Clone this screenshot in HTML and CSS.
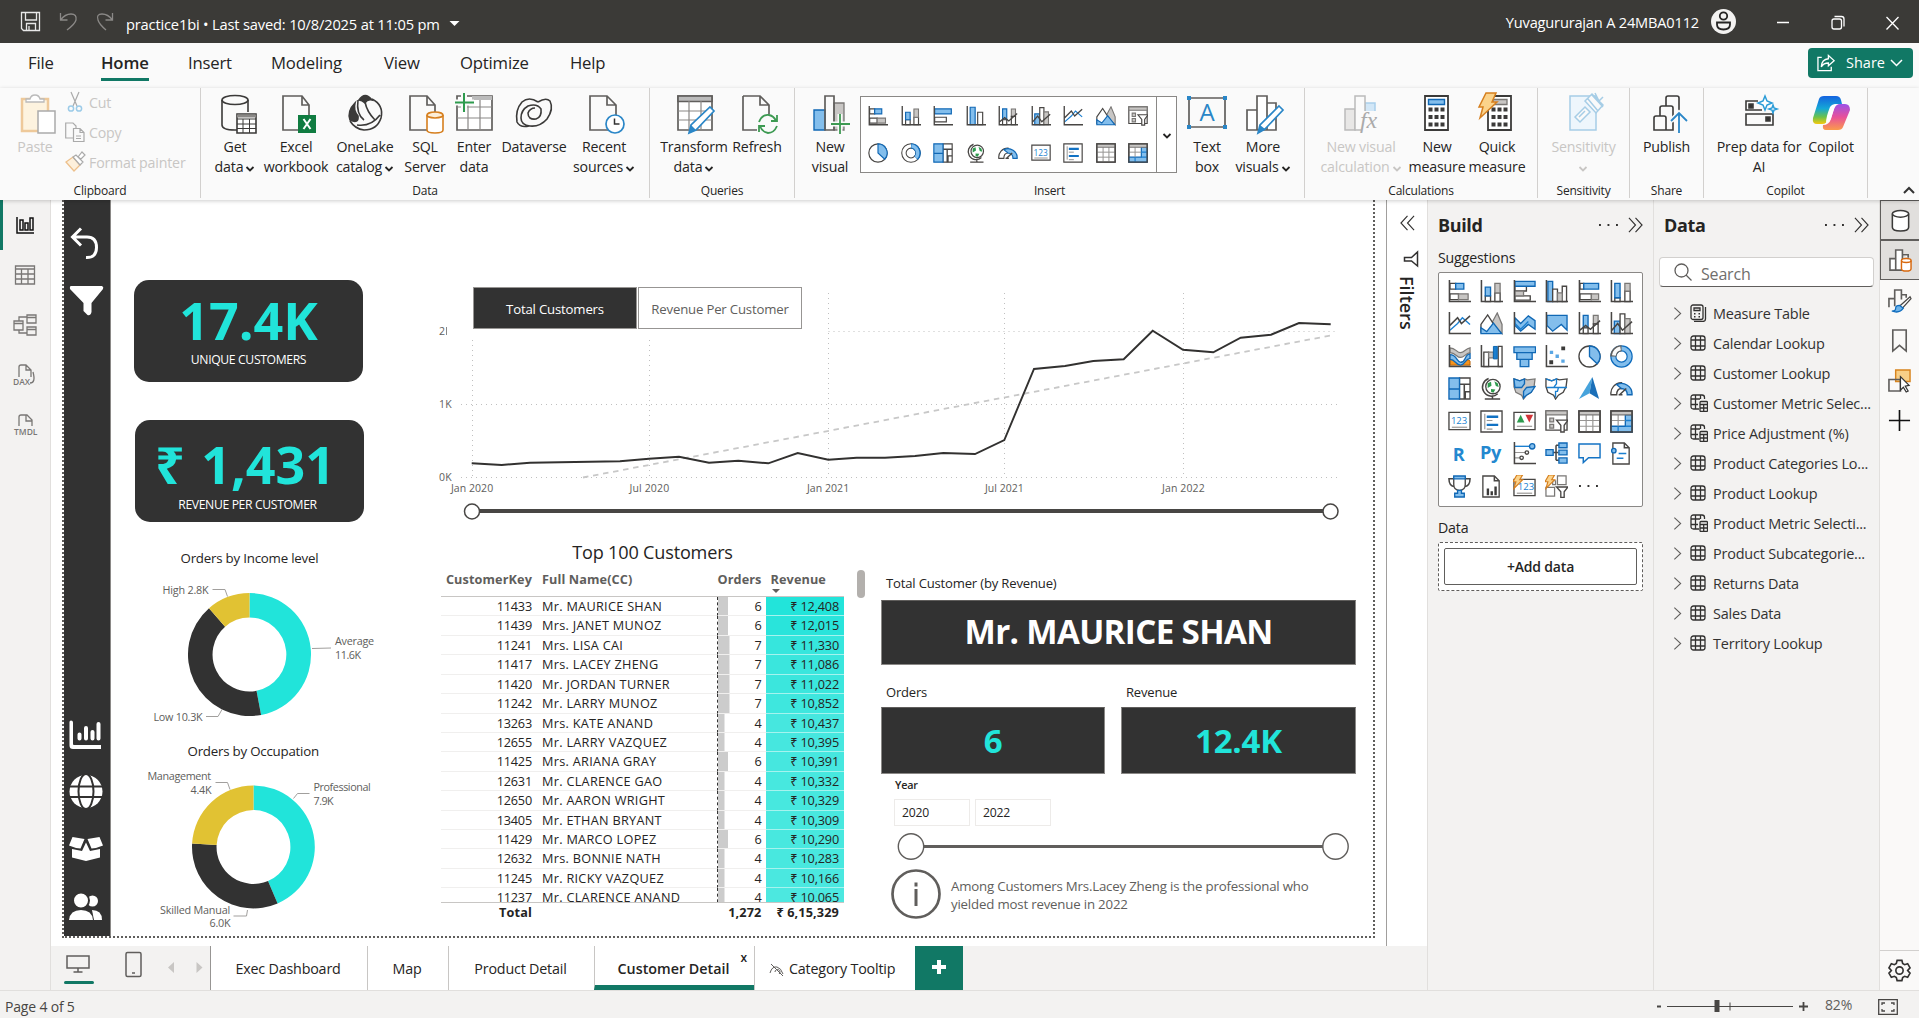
FILE: index.html
```html
<!DOCTYPE html>
<html lang="en">
<head>
<meta charset="utf-8">
<title>practice1bi</title>
<link rel="stylesheet" href="styles.css">
</head>
<body>
<svg class="defs" width="0" height="0">
  <defs>
    <linearGradient id="cp1" x1="0" y1="0" x2="0" y2="1"><stop offset="0" stop-color="#1463e0"/><stop offset=".45" stop-color="#15a8d6"/><stop offset=".75" stop-color="#6cc24a"/><stop offset="1" stop-color="#f6c90e"/></linearGradient>
    <linearGradient id="cp2" x1="0" y1="0" x2="0" y2="1"><stop offset="0" stop-color="#9b52e8"/><stop offset=".5" stop-color="#e8509a"/><stop offset="1" stop-color="#fb9b4b"/></linearGradient>
  </defs>
  <symbol id="v-sbar" viewBox="0 0 24 24"><path class="w" d="M2 3.500h6v6H2zM2 14.500h9v6H2z"/><path class="b" d="M8 3.500h8.500v6H8z"/><path class="g" d="M11 14.500h10v6H11z"/><path class="a" d="M1.500 0v22.500H24"/></symbol>
  <symbol id="v-scol" viewBox="0 0 24 24"><path class="w" d="M5.500 16.500h5.500v6H5.500zM15.500 13.500h5.500v9h-5.500z"/><path class="b" d="M5.500 7.500h5.500v9H5.500z"/><path class="g" d="M15.500 3.500h5.500v10h-5.500z"/><path class="a" d="M1.500 0v22.500H24"/></symbol>
  <symbol id="v-cbar" viewBox="0 0 24 24"><path class="w" d="M2 6.500h12v5H2zM2 16.500h16v4.500H2z"/><path class="g" d="M2 11.500h9v5H2z"/><path class="b" d="M2 1.500h21v5H2z"/><path class="a" d="M1.500 0v22.500H24"/></symbol>
  <symbol id="v-cbar2" viewBox="0 0 24 24"><path class="w" d="M2 13.500h14v5.500H2z"/><path class="b" d="M2 3.500h20v6H2z"/><path class="a" d="M1.500 0v22.500H24"/></symbol>
  <symbol id="v-ccol" viewBox="0 0 24 24"><path class="b" d="M3 1.500h5v21H3z"/><path class="w" d="M8 9.500h5v13H8zM18 6.500h4.500v16H18z"/><path class="g" d="M13 13.500h5v9h-5z"/><path class="a" d="M1.500 0v22.500H24"/></symbol>
  <symbol id="v-ccol2" viewBox="0 0 24 24"><path class="b" d="M5 1.500h6v21H5z"/><path class="w" d="M14 7.500h6v15h-6z"/><path class="a" d="M1.500 0v22.500H24"/></symbol>
  <symbol id="v-hbar" viewBox="0 0 24 24"><path class="w" d="M2 3.500h4v6H2zM2 14.500h12v6H2z"/><path class="b" d="M6 3.500h15.500v6H6z"/><path class="g" d="M14 14.500h7.500v6H14z"/><path class="a" d="M1.500 0v22.500H24"/></symbol>
  <symbol id="v-hcol" viewBox="0 0 24 24"><path class="w" d="M5 18.500h5.500v4H5zM15.500 11.500h5.500v11h-5.500z"/><path class="b" d="M5 3.500h5.500v15H5z"/><path class="g" d="M15.500 3.500h5.500v8h-5.500z"/><path class="a" d="M1.500 0v22.500H24"/></symbol>
  <symbol id="v-line" viewBox="0 0 24 24"><path class="bl" d="M2 19L10 12l5-6 8 7"/><path class="a" d="M2 14L10 6l4 6 9-8M1.500 0v22.500H24"/></symbol>
  <symbol id="v-area" viewBox="0 0 24 24"><path class="g" d="M12 12L18 1l5 12v9.500z"/><path class="w" d="M1 13L8 3l9 14-6 4H1z"/><path class="b" d="M1 22.500v-6l6 4 7-9 8.500 11z"/></symbol>
  <symbol id="v-sarea" viewBox="0 0 24 24"><path class="b" d="M2 6l6 6 8-8 7 5v9l-7-5-8 7-6-6z"/><path class="bl" d="M2 12l6 6 8-8"/><path class="a" d="M1.500 0v22.500H24"/></symbol>
  <symbol id="v-harea" viewBox="0 0 24 24"><path class="b" d="M2 3.500h21V19l-6-6-9 7-6-6z"/><path class="a" d="M1.500 0v22.500H24"/></symbol>
  <symbol id="v-lscol" viewBox="0 0 24 24"><path class="b" d="M5.500 3.500h5v13h-5z"/><path class="g" d="M16 3.500h5v9h-5z"/><path class="w" d="M5.500 16.500h5v6h-5zM16 12.500h5v10h-5z"/><path class="a" d="M2 19l6-5 5 4 10-9M1.500 0v22.500H24"/></symbol>
  <symbol id="v-lccol" viewBox="0 0 24 24"><path class="b" d="M4.500 9.500h6v13h-6z"/><path class="w" d="M10.500 2h5v20.500h-5z"/><path class="g" d="M15.500 7h5.500v15.500h-5.500z"/><path class="a" d="M2 19l6-7 5 7 10-9M1.500 0v22.500H24"/></symbol>
  <symbol id="v-ribbon" viewBox="0 0 24 24"><path d="M2 14q6 0 7 3t7 0 7 0v4H2z" fill="#f7941d" stroke="#b45f06"/><path class="b" d="M2 10c8 0 7 9 12 8s3-8 9-9v5c-6 1-5 7-10 7S8 15 2 15z"/><path class="g" d="M2 3c6 0 7 5 11 5s5-4 10-5v5c-5 1-6 5-10 5S8 8 2 8z"/><path class="a" d="M1.500 0v22.500H24"/></symbol>
  <symbol id="v-water" viewBox="0 0 24 24"><path class="w" d="M4 7.500h5v15H4zM19 1.500h4v21h-4z"/><path class="g" d="M9 7.500h5v6H9z"/><path d="M14 1.500h4v13h-4z" fill="#1a7fd0" stroke="#0b63ab"/><path class="a" d="M1.500 0v22.500H24"/></symbol>
  <symbol id="v-funnel" viewBox="0 0 24 24"><path class="b" d="M1 2h22.500v6H1zM4 8h16v7H4zM7.500 15h9v7.500h-9z"/></symbol>
  <symbol id="v-scatter" viewBox="0 0 24 24"><path d="M5 6h3.500v3.500H5zM11 10h3.500v3.500H11zM17 15h3.500v3.500H17z" fill="#5aa7e4"/><path d="M17 1.500h4v4h-4zM4.500 16h4v4h-4z" fill="#3b3a39"/><path class="a" d="M1.500 0v22.500H24"/></symbol>
  <symbol id="v-pie" viewBox="0 0 24 24"><circle class="w" cx="12" cy="12" r="11"/><path class="b" d="M12 1a11 11 0 0 1 8 18.500L12 12z"/></symbol>
  <symbol id="v-donut" viewBox="0 0 24 24"><circle cx="12" cy="12" r="8.500" fill="none" stroke="#0f6cbd" stroke-width="6.500"/><circle cx="12" cy="12" r="8.500" fill="none" stroke="#83beec" stroke-width="4"/><path d="M3.500 12A8.500 8.500 0 0 1 12 3.500" fill="none" stroke="#605e5c" stroke-width="6.500"/><path d="M4 11A8.500 8.500 0 0 1 11 3.500" fill="none" stroke="#fafafa" stroke-width="4"/></symbol>
  <symbol id="v-donut2" viewBox="0 0 24 24"><circle cx="12" cy="12" r="8.500" fill="none" stroke="#484644" stroke-width="6.500"/><circle cx="12" cy="12" r="8.500" fill="none" stroke="#fff" stroke-width="4"/><path d="M12 3.500A8.500 8.500 0 0 1 18 18" fill="none" stroke="#0f6cbd" stroke-width="6.500"/><path d="M12.500 3.500A8.500 8.500 0 0 1 18 17.500" fill="none" stroke="#83beec" stroke-width="4"/></symbol>
  <symbol id="v-tree" viewBox="0 0 24 24"><path class="w" d="M12 1h11v22H12z"/><path class="a" d="M12 7.500h11M17 7.500V23M17 15.500h6M18 15v8"/><path class="b" d="M1 1h11v11.500H1zM1 12.500h11V23H1z"/></symbol>
  <symbol id="v-globe" viewBox="0 0 24 24"><path class="a" d="M9 1.500a9.500 9.500 0 1 0 9.500 16M13 19v3.500M5 23h16"/><circle class="w" cx="13.500" cy="10" r="7.500"/><path d="M8 6.500l3.500-1.500.5 4-4 2.500zM15 4.500l3.500 2 1 4-3-1zM11.500 12.500l4.500.5-2 3.500-2.500-1z" fill="#2e9b4e"/></symbol>
  <symbol id="v-map" viewBox="0 0 24 24"><path class="g" d="M1 2l6 2 5-2 3 1 8-1-1 8-3 6-5 3-3 4-2-4-6-3-2-6z"/><path class="b" d="M1 2l6 2 5-2 0 5-3 4H2zM14 11l9-1-4 6-5 3-3 3V15z"/></symbol>
  <symbol id="v-shape" viewBox="0 0 24 24"><path class="w" d="M1 2l6 2 5-2 3 1 8-1-1 8-3 6-5 3-3 4-2-4-6-3-2-6z"/><path class="bl" d="M1 2l6 2 5-2 0 5-3 4H2M2 11h21M14 11l-1 4-2 0v6"/></symbol>
  <symbol id="v-arrow" viewBox="0 0 24 24"><path d="M15 0L1 23l11-6z" fill="#46a3dc"/><path d="M15 0L12 17l10 6z" fill="#1b6fb8"/></symbol>
  <symbol id="v-gauge" viewBox="0 0 24 24"><path class="w" d="M1 18.500A11 11 0 0 1 12 6v6q-5 0-5 6.500z"/><path class="b" d="M7 8A11 11 0 0 1 23 18.500h-5q0-6-6-6.500z"/><path class="a" d="M10 18.500L17 12M9 18.500h4"/></symbol>
  <symbol id="v-card" viewBox="0 0 24 24"><path class="w" d="M1 2.500h22v18H1z"/><text x="3" y="15" class="n123">123</text><path class="gl" d="M4 18h16"/></symbol>
  <symbol id="v-mcard" viewBox="0 0 24 24"><path class="w" d="M1 1h22v22H1z"/><path class="gl" d="M5 4v16M7 11h6M7 20h6"/><path d="M7 7h12M7 15.500h12" stroke="#1272c4" stroke-width="2.500"/></symbol>
  <symbol id="v-kpi" viewBox="0 0 24 24"><path class="w" d="M1 2.500h22v18H1z"/><path d="M4 13h8L8 5z" fill="#2e9b4e"/><path d="M13 5h8l-4 8z" fill="#d13438"/><path class="gl" d="M4 17h16"/></symbol>
  <symbol id="v-slicer" viewBox="0 0 24 24"><path class="w" d="M1 1h22v20H1z"/><path class="g" d="M1 1h22v4H1zM5 8.500h4v4H5zM5 15h4v4H5z"/><path class="w" d="M12 10.500h12l-4 5.500v7h-3.500v-7z"/></symbol>
  <symbol id="v-table" viewBox="0 0 24 24"><path class="w" d="M1 1h22v22H1z"/><path class="gl" d="M8.500 5v18M15.500 5v18M1 11h22M1 17h22"/><path class="g" d="M1 1h22v4H1z"/><path class="a" d="M1 1h22v22H1z"/></symbol>
  <symbol id="v-matrix" viewBox="0 0 24 24"><path class="w" d="M1 1h22v22H1z"/><path class="b" d="M16 5h7v18H1v-6h15z"/><path class="gl" d="M8.500 5v12M1 11h15"/><path class="bl" d="M8.500 17v6M16 11h7M16 17h7"/><path class="g" d="M1 1h22v4H1z"/><path class="a" d="M1 1h22v22H1z"/></symbol>
  <symbol id="v-r" viewBox="0 0 24 24"><text x="5" y="20" class="lang">R</text></symbol>
  <symbol id="v-py" viewBox="0 0 24 24"><text x="0" y="18" class="lang">Py</text></symbol>
  <symbol id="v-infl" viewBox="0 0 24 24"><path class="bl" d="M2 4.500h18"/><circle class="b" cx="20" cy="4.500" r="2.800"/><path class="gl" d="M2 11h12M2 16.500h7"/><circle class="w" cx="14.500" cy="11" r="1.800"/><circle class="w" cx="9" cy="16.500" r="1.800"/><path class="a" d="M1.500 0v22.500H24"/></symbol>
  <symbol id="v-decomp" viewBox="0 0 24 24"><path class="a" d="M8 11h6M11.500 3.500v15.500M11.500 3.500h3M11.500 19h3"/><path class="b" d="M1 8h7.500v6H1zM14.500 1h8.500v5h-8.500zM14.500 8.500h8.500v5h-8.500zM14.500 16.500h8.500v5.500h-8.500z"/></symbol>
  <symbol id="v-qa" viewBox="0 0 24 24"><path d="M1 2h22v14.500H11L5.500 21.500v-5H1z" fill="#fafafa" stroke="#1272c4" stroke-width="1.500"/></symbol>
  <symbol id="v-narr" viewBox="0 0 24 24"><path class="w" d="M3 1h12l5 5v17H3z"/><path class="a" d="M15 1v5h5"/><path class="bl" d="M9 12h8M7 17h7M3 10h3"/><circle class="b" cx="4" cy="9" r="2.300"/></symbol>
  <symbol id="v-trophy" viewBox="0 0 24 24"><path class="a" d="M6 4H1q0 8 6 8M18 4h5q0 8-6 8"/><path class="w" d="M6 2h12v8q0 6-6 6t-6-6z"/><path class="b" d="M6 1h12v3H6zM10 16h4v3h3v4H7v-4h3z"/></symbol>
  <symbol id="v-page" viewBox="0 0 24 24"><path class="w" d="M3 1h12l5 5v17H3z"/><path d="M7 14h2.500v7H7zM11 17h2.500v4H11zM15 12h2.500v9H15z" fill="#3b3a39"/><path class="a" d="M15 1v5h5"/></symbol>
  <symbol id="v-bcard" viewBox="0 0 24 24"><path class="w" d="M1 4.500h22v17H1z"/><text x="5" y="16" class="n123">123</text><path class="gl" d="M4 19h16"/><path class="o" d="M4 0h6L7 5h3L1 14l2-7H0z"/></symbol>
  <symbol id="v-bslicer" viewBox="0 0 24 24"><path class="gw" d="M13 1h9v9h-9zM1 13h9v9H1zM8 6h3v4H8z"/><path class="w" d="M12 12.500h12l-4 5v6h-3.500v-6z"/><path class="o" d="M4 0h6L7 5h3L1 14l2-7H0z"/></symbol>
  <symbol id="chev" viewBox="0 0 10 8"><path d="M1.500 2l3.500 3.500L8.500 2" fill="none" stroke="currentColor" stroke-width="1.800"/></symbol>
  <symbol id="t-table" viewBox="0 0 16 16"><rect class="t" x="1" y="1" width="14" height="14" rx="2.500"/><path class="t" d="M5.500 1v14M10.500 1v14M1 5h14M1 11h14"/></symbol>
  <symbol id="t-calc" viewBox="0 0 18 18"><rect class="t" x="1" y="1" width="12" height="14.500" rx="2"/><path class="t" d="M4 4h6v2.500H4zM15.500 3v12q0 2.500-3 2.500H4"/><path class="tf" d="M4 9h1.500v1.500H4zM8.500 9H10v1.500H8.500zM4 12h1.500v1.500H4zM8.500 12H10v1.500H8.500z"/></symbol>
  <symbol id="t-mix" viewBox="0 0 18 18"><path class="t" d="M9 15H3.500Q1 15 1 12.500v-9Q1 1 3.500 1H12q2.500 0 2.500 2.500V5M5.500 1v14M1 5h9M1 10.500h7M10.500 1v4"/><rect class="t" x="10" y="7.500" width="7.500" height="10" rx="1"/><path class="t" d="M10 10.500h7.500M10 14h7.500M13.700 10.500v7"/></symbol>
  <symbol id="open" viewBox="0 0 10 16"><path d="M1.500 1.500L8.500 8l-7 6.500" fill="none" stroke="#605e5c" stroke-width="1.200"/></symbol>
  <symbol id="dchev" viewBox="0 0 16 16"><path d="M1 .5L8 8l-7 7.500M8 .5L15 8l-7 7.500" fill="none" stroke="#323130" stroke-width="1.200"/></symbol>
</svg>

<header class="titlebar">
  <svg class="tb-icons" viewBox="0 0 120 43"><g fill="none" stroke="#e8e8e8" stroke-width="1.300"><path d="M21.500 12.500h18v18h-16l-2-2zM25.500 12.500v7.500h11v-7.500M26.500 30.500v-7h9v7M29 26v4.500"/><g stroke="#8b8987"><path d="M60.500 13v7h7M60.500 20Q65 14 71 14t5 6q-1 4-9 10"/><path d="M112.500 13v7h-7M112.500 20Q108 14 102 14t-4 6q1 4 8 10"/></g></g></svg>
  <span class="file">practice1bi • Last saved: 10/8/2025 at 11:05 pm</span>
  <svg class="caret" viewBox="0 0 12 6"><path d="M0 0h12L6 6z" fill="#fff"/></svg>
  <span class="user">Yuvagururajan A 24MBA0112</span>
  <svg class="wins" viewBox="1710 0 209 43"><circle cx="1723.500" cy="21.500" r="12.500" fill="#f3f2f1"/><g fill="none" stroke="#252423" stroke-width="1.800"><circle cx="1723.500" cy="16" r="3.700"/><path d="M1717 22.500h13v2q0 5-6.500 5t-6.500-5z"/></g><g fill="none" stroke="#fff" stroke-width="1.300"><path d="M1777 22.500h12M1886.500 17l12 12.500M1898.500 17l-12 12.500"/><rect x="1832" y="19" width="9.500" height="10" rx="2"/><path d="M1834.500 16.500h7q2.500 0 2.500 2.500v7.500"/></g></svg>
</header>

<nav class="menu">
  <span>File</span><span class="on">Home</span><span>Insert</span><span>Modeling</span><span>View</span><span>Optimize</span><span>Help</span>
  <button class="share"><svg viewBox="0 0 20 18"><path d="M5 3H1v14h14v-4M12 1l6 5.500-6 5.500V9q-5 0-7.500 4Q5 5 12 4.500z" fill="none" stroke="#fff" stroke-width="1.400"/></svg><span>Share</span><svg class="sc" viewBox="0 0 13 8"><path d="M1 1l5.500 5.500L12 1" fill="none" stroke="#fff" stroke-width="1.500"/></svg></button>
</nav>

<section class="ribbon">
  <div class="grp g-clip">
    <div class="btns">
      <div class="rb off"><svg viewBox="0 0 40 44"><path d="M7 8h26v32H7z" fill="#fdf3df" stroke="#eec99a" stroke-width="2.500"/><path d="M11 11V8h4q1-4 5-4t5 4h4v3z" fill="#fff" stroke="#bbb" stroke-width="1.300"/><path d="M23 20h17v22H23z" fill="#fff" stroke="#aaa" stroke-width="1.500"/></svg><span>Paste</span></div>
      <div class="stack">
        <div><svg viewBox="0 0 20 20"><path d="M6 0l6 14M14 0L8 14" stroke="#aaa" stroke-width="1.200"/><g fill="none" stroke="#9ccbe8" stroke-width="1.500"><circle cx="6" cy="16.500" r="2.600"/><circle cx="14" cy="16.500" r="2.600"/></g></svg>Cut</div>
        <div><svg viewBox="0 0 20 20"><path d="M8 16H.7V1H8l3 3v2M8.500 6.500H15l4 4v9H8.500zM15 6.500v4h4M11 14h5M11 16.500h5" fill="none" stroke="#aaa" stroke-width="1.200"/></svg>Copy</div>
        <div><svg viewBox="0 0 20 20"><path d="M1 10l7-5 7 8-6 6z" fill="#fdf0dc" stroke="#edc08c" stroke-width="1.300"/><path d="M8 5l3-2 7 7-3 3zM13 5l4-5 3 3-4 4z" fill="#fff" stroke="#aaa" stroke-width="1.200"/></svg>Format painter</div>
      </div>
    </div>
    <span class="gl-label">Clipboard</span>
  </div>
  <div class="grp g-data">
    <div class="btns">
      <div class="rb"><svg viewBox="0 0 40 44"><g class="k"><path d="M7 9v25q0 5 13 5h2M33 9v12"/><ellipse cx="20" cy="9" rx="13" ry="4.500"/><path d="M22 23h19v19H22z" fill="#fff"/><path d="M22 25h19" stroke-width="3" stroke="#8a8886"/><path d="M22 28h19M22 33h19M22 37.500h19M28 28v14M34.500 28v14" stroke-width="1"/></g></svg><span>Get</span><span>data<svg class="cv"><use href="#chev"/></svg></span></div>
      <div class="rb"><svg viewBox="0 0 40 44"><path class="p" d="M7 5h19l7 9v25H7zM26 5v9h7"/><path d="M22 24h18v18H22z" fill="#107c41"/><path d="M27.500 28l7 10M34.500 28l-7 10" stroke="#fff" stroke-width="2"/></svg><span>Excel</span><span>workbook</span></div>
      <div class="rb"><svg viewBox="0 0 40 44"><g class="k"><path d="M10 12q-8 8-5 17 9 4 8-4-5-6-3-13z" fill="#3b3a39"/><path d="M14 9q6-9 13 0-5-1-7 3-3-3-6-3z" fill="#3b3a39"/><path d="M27 8q12 6 9 19-4 12-17 12-9-1-14-9M13 9q-2 14 6 20M20 11q2 10 10 18M12 34q14 2 23-10"/></g></svg><span>OneLake</span><span>catalog <svg class="cv"><use href="#chev"/></svg></span></div>
      <div class="rb"><svg viewBox="0 0 40 44"><path class="p" d="M5 5h17l8 9v25H5zM22 5v9h8"/><path d="M22 24v15q0 3 8 3t8-3V24" fill="#fff" stroke="#d67f1e" stroke-width="1.600"/><ellipse cx="30" cy="24" rx="8" ry="3" fill="#fdeed7" stroke="#d67f1e" stroke-width="1.600"/></svg><span>SQL</span><span>Server</span></div>
      <div class="rb"><svg viewBox="0 0 40 44"><g class="p"><path d="M3 5h35v34H3z" fill="#fff"/><path d="M18 7h20" stroke-width="4" stroke="#bbb"/><path d="M3 16h35M3 27h35M14 9v30M26 9v30" stroke="#8a8886" stroke-width="1.200"/></g><path d="M10 2v19M1 11.500h19" stroke="#fafafa" stroke-width="6"/><path d="M10 2v19M1 11.500h19" stroke="#2e9b4e" stroke-width="2"/></svg><span>Enter</span><span>data</span></div>
      <div class="rb"><svg viewBox="0 0 40 44"><g class="k"><path d="M24 11q8-5 12-1 4 8-3 18-7 8-17 7-9-1-9-8 0-8 7-12 9-3 13 3 1 8-5 10-8 1-8-6 2-5 7-5M24 11Q15 5 8 11q-7 8-5 20 3 6 12 4"/></g></svg><span>Dataverse</span></div>
      <div class="rb"><svg viewBox="0 0 40 44"><path class="p" d="M6 5h17l9 9v25H6zM23 5v9h9"/><circle cx="31" cy="33" r="9" fill="#fff" stroke="#2a86c7" stroke-width="1.700"/><path d="M30.500 27.500V33h5" fill="none" stroke="#333" stroke-width="1.500"/></svg><span>Recent</span><span>sources<svg class="cv"><use href="#chev"/></svg></span></div>
    </div>
    <span class="gl-label">Data</span>
  </div>
  <div class="grp g-query">
    <div class="btns">
      <div class="rb"><svg viewBox="0 0 40 44"><g class="p"><path d="M4 5h34v34H4z" fill="#fff"/><path d="M4 8h34" stroke-width="5" stroke="#bbb"/><path d="M4 5h34v5.500H4z"/><path d="M4 20h34M4 29h34M15 10v29M27 10v29" stroke-width="1.200" stroke="#8a8886"/></g><path d="M36 16l4 4-18 19-7 3 2-8z" fill="#fff" stroke="#2a86c7" stroke-width="1.700"/><path d="M15 42l2-8 5 5z" fill="#2a86c7"/></svg><span>Transform</span><span>data <svg class="cv"><use href="#chev"/></svg></span></div>
      <div class="rb"><svg viewBox="0 0 40 44"><path class="p" d="M6 5h17l9 9v9M23 5v9h9M6 5v34h14"/><path d="M22 31q3-8 10-7 5 1 7 6M40 24v6h-6M40 35q-3 7-9 7-6-1-8-7M22 41v-6h6" fill="none" stroke="#3d9a52" stroke-width="1.800"/></svg><span>Refresh</span></div>
    </div>
    <span class="gl-label">Queries</span>
  </div>
  <div class="grp g-ins">
    <div class="btns">
      <div class="rb"><svg viewBox="0 0 40 44"><path class="g" d="M24 12h10v27H24z"/><path class="b" d="M4 19h11v20H4z"/><path class="p" d="M15 5h9v34h-9z" fill="#fff"/><path d="M30 23v20M21 33h19" stroke="#fafafa" stroke-width="5"/><path d="M30 23v20M21 33h19" stroke="#3d9a52" stroke-width="1.800"/></svg><span>New</span><span>visual</span></div>
      <div class="gallery">
        <div class="gal-grid">
          <svg><use href="#v-sbar"/></svg><svg><use href="#v-scol"/></svg><svg><use href="#v-cbar2"/></svg><svg><use href="#v-ccol2"/></svg><svg><use href="#v-lscol"/></svg><svg><use href="#v-lccol"/></svg><svg><use href="#v-line"/></svg><svg><use href="#v-area"/></svg><svg><use href="#v-slicer"/></svg>
          <svg><use href="#v-pie"/></svg><svg><use href="#v-donut2"/></svg><svg><use href="#v-tree"/></svg><svg><use href="#v-globe"/></svg><svg><use href="#v-gauge"/></svg><svg><use href="#v-card"/></svg><svg><use href="#v-mcard"/></svg><svg><use href="#v-table"/></svg><svg><use href="#v-matrix"/></svg>
        </div>
        <div class="gal-more"><svg class="cv"><use href="#chev"/></svg></div>
      </div>
      <div class="rb"><svg viewBox="0 0 40 44"><path class="p" d="M2 7h36v29H2z"/><path d="M0 5h4v4H0zM36 5h4v4h-4zM0 34h4v4H0zM36 34h4v4h-4z" fill="#2a86c7"/><text x="20" y="30" class="bigA">A</text></svg><span>Text</span><span>box</span></div>
      <div class="rb"><svg viewBox="0 0 40 44"><g class="p"><path d="M4 19h10v20H4zM14 5h10v34H14zM24 12h9v27h-9z" fill="#fff"/></g><path d="M36 15l4 4-18 19-7 4 2-8z" fill="#fff" stroke="#2a86c7" stroke-width="1.700"/><path d="M15 42l2-8 5 4z" fill="#2a86c7"/></svg><span>More</span><span>visuals <svg class="cv"><use href="#chev"/></svg></span></div>
    </div>
    <span class="gl-label">Insert</span>
  </div>
  <div class="grp g-calc">
    <div class="btns">
      <div class="rb off"><svg viewBox="0 0 40 44"><g stroke="#bbb" stroke-width="1.500" fill="#e8e7e6"><path d="M4 18h10v21H4z"/><path d="M24 12h10v12H24z" fill="#d2e7f7" stroke="#a9cfec"/><path d="M14 5h10v34H14z" fill="#fafafa"/></g><path d="M20 20h20v20H20z" fill="#fafafa"/><text x="19" y="37" class="fx">fx</text></svg><span>New visual</span><span>calculation <svg class="cv"><use href="#chev"/></svg></span></div>
      <div class="rb"><svg viewBox="0 0 40 44"><path d="M8 5h23v34H8z" fill="#fff" stroke="#3b3a39" stroke-width="1.800"/><path class="b" d="M11.500 8.500h16v5h-16z"/><path class="dots" d="M11.500 18.500H28M11.500 26H28M11.500 33.500H28"/></svg><span>New</span><span>measure</span></div>
      <div class="rb"><svg viewBox="0 0 40 44"><path d="M11 5h23v34H11z" fill="#fff" stroke="#3b3a39" stroke-width="1.800"/><path class="g" d="M16 8.500h14v5H16z"/><path class="dots" d="M14.500 18.500H31M14.500 26H31M14.500 33.500H31"/><path d="M9 2h10l-4 9h5L3 27l3-11H2z" fill="#fbd38b" stroke="#d67f1e" stroke-width="1.500"/></svg><span>Quick</span><span>measure</span></div>
    </div>
    <span class="gl-label">Calculations</span>
  </div>
  <div class="grp g-sens">
    <div class="btns"><div class="rb off"><svg viewBox="0 0 40 44"><g fill="#eef6fc" stroke="#a6cde6" stroke-width="1.500"><path d="M7 5h26v34H7z"/><path d="M12 26l10-10 5 5-10 10zM16 26l6-6" fill="#fafafa"/><path d="M22 10l7-7 11 11-7 8zM25 8l10 12M29 4l11 12M32 2l4 8 4-4" fill="#fafafa"/></g></svg><span>Sensitivity</span><span class="only"><svg class="cv"><use href="#chev"/></svg></span></div></div>
    <span class="gl-label">Sensitivity</span>
  </div>
  <div class="grp g-share">
    <div class="btns"><div class="rb"><svg viewBox="0 0 40 44"><g class="k"><path d="M20 39H7V27q0-2 2-2h8q2 0 2 2v12M13 25V17q0-2 2-2h9q2 0 2 2v22h-6M19 15V7q0-2 2-2h9q2 0 2 2v13"/></g><path d="M32 42V23M24 30l8-8 8 8" fill="none" stroke="#fafafa" stroke-width="5"/><path d="M32 42V23M24 30l8-8 8 8" fill="none" stroke="#2a86c7" stroke-width="1.800"/></svg><span>Publish</span></div></div>
    <span class="gl-label">Share</span>
  </div>
  <div class="grp g-cop">
    <div class="btns">
      <div class="rb"><svg viewBox="0 0 40 44"><g class="k"><path d="M19 10H7v9h16M7 23h27v11H7z"/><path d="M10 13h4v4h-4zM27 26h4v4h-4z" fill="#333"/></g><g fill="#fff" stroke="#2a9bd7" stroke-width="1.500"><path d="M26 5l2 5 5 2-5 2-2 5-2-5-5-2 5-2zM34 14l1 3 3 1-3 1-1 3-1-3-3-1 3-1z"/></g></svg><span>Prep data for</span><span>AI</span></div>
      <div class="rb"><svg viewBox="0 0 40 44"><path d="M8 8q1-3 5-3h12q4 0 5 4l1 4h-5q-4 0-5 4l-3 10q-2 6-7 6H6q-5 0-4-6z" fill="url(#cp1)"/><path d="M32 36q-1 3-5 3H15q-4 0-3-5 6 0 8-6l3-10q2-5 6-5h5q5 0 5 6z" fill="url(#cp2)"/><path d="M19 16q2-3 6-3h2q-3 1-4 5l-3 9q-1 4-5 5 0-6 4-16z" fill="#fff"/></svg><span>Copilot</span></div>
    </div>
    <span class="gl-label">Copilot</span>
  </div>
  <svg class="collapse" viewBox="0 0 12 8"><path d="M1 7l5-5 5 5" fill="none" stroke="#333" stroke-width="2"/></svg>
</section>

<main class="main">
  <aside class="views">
    <div class="on"><svg viewBox="0 0 24 24"><g fill="none" stroke="#111" stroke-width="1.500"><path d="M4 4v16h17M7 7h3v10H7zM12 10h3v7h-3zM17 5h3v12h-3z"/></g></svg></div>
    <div><svg viewBox="0 0 24 24"><g fill="none" stroke="#797775" stroke-width="1.300"><path d="M2.500 3h19v18h-19zM2.500 6h19M2.500 11h19M2.500 16h19M8.500 6v15M15 6v15"/></g></svg></div>
    <div><svg viewBox="0 0 24 24"><g fill="none" stroke="#797775" stroke-width="1.300"><path d="M1 8h9v9H1zM1 10.500h9M14 2h9v8h-9zM14 4.500h9M14 14h9v8h-9zM14 16.500h9M6 8V4h8M6 17v3h8"/></g></svg></div>
    <div><svg viewBox="0 0 24 24"><g fill="none" stroke="#797775" stroke-width="1.300"><path d="M6 14V4q0-2 2-2h5l5 5v7M13 2v5h5M20 9q3 11-3 11"/></g><text x="0" y="21.500" class="vt">DAX</text></svg></div>
    <div><svg viewBox="0 0 24 24"><g fill="none" stroke="#797775" stroke-width="1.300"><path d="M6 13V4q0-2 2-2h6l5 5v6M13 2v6h6"/></g><text x="1" y="21.500" class="vt">TMDL</text></svg></div>
  </aside>

  <section class="center">
    <div class="work">
      <div class="area">
        <div class="page">
          <nav class="pnav">
            <svg viewBox="64 200 47 736">
              <g fill="none" stroke="#fff" stroke-width="3"><path d="M81 228.500L72.500 237l8.500 8.500M73 237h14q9.500 0 9.500 10.500T86 257.500"/></g>
              <g fill="#fff"><path d="M71 286h31q2 1 1 3L91.500 303v9q-1 4-4 3l-4-4v-8L70 289q-.5-3 1-3z"/>
              <path d="M71 720.500q2 0 2 2V744q0 1 1 1h27v4H73q-3.500 0-3.500-3.500V722q0-1.500 1.500-1.500z"/></g>
              <g stroke="#fff" stroke-width="4" stroke-linecap="round"><path d="M79.500 734.500v4M86 728v10.500M92.500 732v6.500M98.500 724v14.500"/></g>
              <circle cx="86" cy="791.500" r="16.500" fill="#fff"/><g fill="none" stroke="#323130" stroke-width="2"><ellipse cx="86" cy="791.500" rx="7.500" ry="17.500"/><path d="M69 786.500h34M69 797h34"/></g>
              <g fill="#fff"><path d="M72.500 837l12 2-4 9.500q-6-.5-11.500-3zM99.500 837l-12 2 4 9.500q6-.5 11.500-3zM72 849l10 2 4-8.500 4 8.500 10-2v8.500L86 861l-14-3.500z"/>
              <circle cx="92.500" cy="901" r="5.500"/><path d="M92 910q10 0 10 10h-8z"/><circle cx="81" cy="900.500" r="8" stroke="#323130" stroke-width="2"/><path d="M69 920q1-10 12-10t12 10z"/></g>
            </svg>
          </nav>
          <div class="kpis">
            <div class="kpi"><b>17.4K</b><span>UNIQUE CUSTOMERS</span></div>
            <div class="kpi two"><b>₹ 1,431</b><span>REVENUE PER CUSTOMER</span></div>
            <svg class="donuts" viewBox="130 540 260 396">
              <text x="180.500" y="562.500" class="dt" textLength="138">Orders by Income level</text>
              <path fill="#21e4da" d="M249.500 593A61.500 61.500 0 0 1 261.100 714.900L256.500 690.800A37 37 0 0 0 249.500 617.500z"/>
              <path fill="#323232" d="M261.100 714.900A61.500 61.500 0 0 1 209 608.200L225.100 626.700A37 37 0 0 0 256.500 690.800z"/>
              <path fill="#e1c233" d="M209 608.200A61.500 61.500 0 0 1 249.500 593V617.500A37 37 0 0 0 225.100 626.700z"/>
              <path class="ld" d="M212.500 589.500h12.500l2.500 7M312 648.500l19-.5M206 716.500h12l4-7"/>
              <g class="dl"><text x="162.500" y="594" textLength="46">High 2.8K</text><text x="335" y="645" textLength="39">Average</text><text x="335" y="659" textLength="26">11.6K</text><text x="153.500" y="721" textLength="49">Low 10.3K</text></g>
              <text x="187.500" y="755.500" class="dt" textLength="131.500">Orders by Occupation</text>
              <path fill="#21e4da" d="M253.500 785.500A61.500 61.500 0 0 1 277.600 903.500L268 881A37 37 0 0 0 253.500 810z"/>
              <path fill="#323232" d="M277.600 903.500A61.500 61.500 0 0 1 192.100 843.500L216.600 844.900A37 37 0 0 0 268 881z"/>
              <path fill="#e1c233" d="M192.100 843.500A61.500 61.500 0 0 1 253.500 785.500V810A37 37 0 0 0 216.600 844.900z"/>
              <path class="ld" d="M215.500 782.500h12l2.500 7M309.500 793.500h-12l-4 5M233.500 916h13l1-6"/>
              <g class="dl"><text x="147.500" y="780" textLength="63.500">Management</text><text x="190.500" y="794" textLength="21">4.4K</text><text x="313.500" y="791" textLength="57">Professional</text><text x="313.500" y="805" textLength="20">7.9K</text><text x="160" y="914" textLength="70">Skilled Manual</text><text x="209.500" y="927" textLength="21">6.0K</text></g>
            </svg>
          </div>
          <div class="content">
            <div class="trend">
              <svg viewBox="430 200 943 330">
                <g class="grid"><path d="M828.500 331.500H1337M461 404.500h876M461 477.500h876M472.500 340v138M649.500 340v138M828.500 293v185M1004.500 293v185M1183.500 293v185"/></g>
                <path d="M583 477.500L1330.500 335.500" fill="none" stroke="#c8c8c8" stroke-width="1.800" stroke-dasharray="5.500 4.700"/>
                <path d="M471.700 463.300L501.700 465 530 462.700 620 461.300 649 458.700 679 456.700 709 462.700 738.300 460.700 768.300 463.300 797.700 453 828.300 459.700 856.700 457.700 885 457.700 915 456 943.300 453 975 454 1004.300 440 1034 369 1065 366 1093.300 361 1123.700 359.300 1152.700 330.700 1183 349.700 1213.300 352.300 1240.700 337.700 1271 334.700 1299 323 1330.700 324.300" fill="none" stroke="#323130" stroke-width="1.900"/>
                <g class="ax"><text x="439" y="335">2</text><path d="M446.500 327v8" stroke="#888"/><text x="439" y="408" textLength="12.500">1K</text><text x="439" y="481" textLength="12.500">0K</text>
                <text x="451" y="492" textLength="42">Jan 2020</text><text x="629.500" y="492" textLength="39.500">Jul 2020</text><text x="807" y="492" textLength="42">Jan 2021</text><text x="985" y="492" textLength="38.500">Jul 2021</text><text x="1162" y="492" textLength="42.500">Jan 2022</text></g>
                <path d="M472 511H1330" stroke="#484644" stroke-width="4"/><circle cx="472" cy="511.500" r="7.500" fill="#fff" stroke="#484644" stroke-width="1.500"/><circle cx="1330.500" cy="511.500" r="7.500" fill="#fff" stroke="#484644" stroke-width="1.500"/>
              </svg>
              <div class="pick"><span class="on">Total Customers</span><span>Revenue Per Customer</span></div>
            </div>
            <div class="lower">
              <div class="tbl">
                <h3>Top 100 Customers</h3>
                <div class="r head"><span>CustomerKey</span><span>Full Name(CC)</span><span>Orders</span><span>Revenue</span></div>
                <div class="rows">
                  <div class="r"><span>11433</span><span>Mr. MAURICE SHAN</span><span class="o6">6</span><span style="background:#22e4da">₹ 12,408</span></div>
                  <div class="r"><span>11439</span><span>Mrs. JANET MUNOZ</span><span class="o6">6</span><span style="background:#29e4db">₹ 12,015</span></div>
                  <div class="r"><span>11241</span><span>Mrs. LISA CAI</span><span class="o7">7</span><span style="background:#36e6dd">₹ 11,330</span></div>
                  <div class="r"><span>11417</span><span>Mrs. LACEY ZHENG</span><span class="o7">7</span><span style="background:#3ae6dd">₹ 11,086</span></div>
                  <div class="r"><span>11420</span><span>Mr. JORDAN TURNER</span><span class="o7">7</span><span style="background:#3be6dd">₹ 11,022</span></div>
                  <div class="r"><span>11242</span><span>Mr. LARRY MUNOZ</span><span class="o7">7</span><span style="background:#3ee7de">₹ 10,852</span></div>
                  <div class="r"><span>13263</span><span>Mrs. KATE ANAND</span><span class="o4">4</span><span style="background:#46e7df">₹ 10,437</span></div>
                  <div class="r"><span>12655</span><span>Mr. LARRY VAZQUEZ</span><span class="o4">4</span><span style="background:#46e7df">₹ 10,395</span></div>
                  <div class="r"><span>11425</span><span>Mrs. ARIANA GRAY</span><span class="o6">6</span><span style="background:#46e7df">₹ 10,391</span></div>
                  <div class="r"><span>12631</span><span>Mr. CLARENCE GAO</span><span class="o4">4</span><span style="background:#47e8df">₹ 10,332</span></div>
                  <div class="r"><span>12650</span><span>Mr. AARON WRIGHT</span><span class="o4">4</span><span style="background:#47e8df">₹ 10,329</span></div>
                  <div class="r"><span>13405</span><span>Mr. ETHAN BRYANT</span><span class="o4">4</span><span style="background:#48e8df">₹ 10,309</span></div>
                  <div class="r"><span>11429</span><span>Mr. MARCO LOPEZ</span><span class="o6">6</span><span style="background:#48e8df">₹ 10,290</span></div>
                  <div class="r"><span>12632</span><span>Mrs. BONNIE NATH</span><span class="o4">4</span><span style="background:#48e8df">₹ 10,283</span></div>
                  <div class="r"><span>11245</span><span>Mr. RICKY VAZQUEZ</span><span class="o4">4</span><span style="background:#4ae8e0">₹ 10,166</span></div>
                  <div class="r"><span>11237</span><span>Mr. CLARENCE ANAND</span><span class="o4">4</span><span style="background:#4ce8e0">₹ 10,065</span></div>
                </div>
                <div class="r total"><span>Total</span><span></span><span>1,272</span><span>₹ 6,15,329</span></div>
              </div>
              <div class="thumb"></div>
              <div class="detail">
                <div class="lbl">Total Customer (by Revenue)</div>
                <div class="dbox name">Mr. MAURICE SHAN</div>
                <div class="pair">
                  <div><div class="lbl">Orders</div><div class="dbox">6</div></div>
                  <div><div class="lbl">Revenue</div><div class="dbox">12.4K</div></div>
                </div>
                <div class="yr">Year</div>
                <div class="yrs"><span>2020</span><span>2022</span></div>
                <svg class="ysl" viewBox="881 830 475 34"><path d="M911 846.500h424" stroke="#605e5c" stroke-width="3"/><g fill="#fff" stroke="#605e5c" stroke-width="1.400"><circle cx="911" cy="846.500" r="12.700"/><circle cx="1335.500" cy="846.500" r="12.700"/></g></svg>
                <div class="info"><svg viewBox="0 0 50 50"><circle cx="25" cy="25" r="23.500" fill="none" stroke="#605e5c" stroke-width="2.700"/><path d="M25 20v17M25 13.500v4" stroke="#605e5c" stroke-width="3"/></svg><p>Among Customers Mrs.Lacey Zheng is the professional who<br>yielded most revenue in 2022</p></div>
              </div>
            </div>
          </div>
        </div>
      </div>
      <div class="filters"><svg class="dc"><use href="#dchev"/></svg><svg class="fn" viewBox="0 0 16 16"><path d="M14.500 1v14l-6-5H1.500V6.500h7z" fill="none" stroke="#323130" stroke-width="1.500"/></svg><span>Filters</span></div>
    </div>
    <div class="tabs">
      <svg class="tabicons" viewBox="51 946 159 44"><g fill="none" stroke="#605e5c" stroke-width="1.500"><path d="M67 956h22v12H67zM78 968v4M73.500 972h9"/><rect x="126" y="952.500" width="15" height="24" rx="1.500"/><path d="M132 973h3"/></g><rect x="64" y="981" width="30" height="3" rx="1.500" fill="#117865"/><path d="M174 962v11l-6-5.500zM196.500 962v11l6-5.500z" fill="#c8c6c4"/></svg>
      <span class="tab t1">Exec Dashboard</span><span class="tab t2">Map</span><span class="tab t3">Product Detail</span><span class="tab t4">Customer Detail<i>x</i></span><span class="tab t5"><svg viewBox="0 0 16 14"><path d="M1 10Q3 3 8 4q4 1 6 7M2 1l12 12M6 9a2.500 2.500 0 1 1 4 2" fill="none" stroke="#605e5c" stroke-width="1"/></svg>Category Tooltip</span><span class="add"><svg viewBox="0 0 14 14"><path d="M7 0v14M0 7h14" stroke="#fff" stroke-width="4"/></svg></span>
    </div>
  </section>

  <aside class="pane build">
    <div class="ph"><h2>Build</h2><span class="dots3"></span><svg class="dc"><use href="#dchev"/></svg></div>
    <div class="sub">Suggestions</div>
    <div class="vis">
      <svg><use href="#v-sbar"/></svg><svg><use href="#v-scol"/></svg><svg><use href="#v-cbar"/></svg><svg><use href="#v-ccol"/></svg><svg><use href="#v-hbar"/></svg><svg><use href="#v-hcol"/></svg>
      <svg><use href="#v-line"/></svg><svg><use href="#v-area"/></svg><svg><use href="#v-sarea"/></svg><svg><use href="#v-harea"/></svg><svg><use href="#v-lscol"/></svg><svg><use href="#v-lccol"/></svg>
      <svg><use href="#v-ribbon"/></svg><svg><use href="#v-water"/></svg><svg><use href="#v-funnel"/></svg><svg><use href="#v-scatter"/></svg><svg><use href="#v-pie"/></svg><svg><use href="#v-donut"/></svg>
      <svg><use href="#v-tree"/></svg><svg><use href="#v-globe"/></svg><svg><use href="#v-map"/></svg><svg><use href="#v-shape"/></svg><svg><use href="#v-arrow"/></svg><svg><use href="#v-gauge"/></svg>
      <svg><use href="#v-card"/></svg><svg><use href="#v-mcard"/></svg><svg><use href="#v-kpi"/></svg><svg><use href="#v-slicer"/></svg><svg><use href="#v-table"/></svg><svg><use href="#v-matrix"/></svg>
      <svg><use href="#v-r"/></svg><svg><use href="#v-py"/></svg><svg><use href="#v-infl"/></svg><svg><use href="#v-decomp"/></svg><svg><use href="#v-qa"/></svg><svg><use href="#v-narr"/></svg>
      <svg><use href="#v-trophy"/></svg><svg><use href="#v-page"/></svg><svg><use href="#v-bcard"/></svg><svg><use href="#v-bslicer"/></svg><span class="dots3"></span>
    </div>
    <div class="sub d">Data</div>
    <div class="drop"><div>+Add data</div></div>
  </aside>

  <aside class="pane data">
    <div class="ph"><h2>Data</h2><span class="dots3"></span><svg class="dc"><use href="#dchev"/></svg></div>
    <div class="search"><svg viewBox="0 0 18 18"><circle cx="7.500" cy="7.500" r="6.500" fill="none" stroke="#605e5c" stroke-width="1.300"/><path d="M12 12l5.500 5.500" stroke="#605e5c" stroke-width="1.300"/></svg><span>Search</span></div>
    <ul>
      <li><svg class="op"><use href="#open"/></svg><svg class="ti m"><use href="#t-calc"/></svg>Measure Table</li>
      <li><svg class="op"><use href="#open"/></svg><svg class="ti"><use href="#t-table"/></svg>Calendar Lookup</li>
      <li><svg class="op"><use href="#open"/></svg><svg class="ti"><use href="#t-table"/></svg>Customer Lookup</li>
      <li><svg class="op"><use href="#open"/></svg><svg class="ti m"><use href="#t-mix"/></svg>Customer Metric Selec...</li>
      <li><svg class="op"><use href="#open"/></svg><svg class="ti m"><use href="#t-mix"/></svg>Price Adjustment (%)</li>
      <li><svg class="op"><use href="#open"/></svg><svg class="ti"><use href="#t-table"/></svg>Product Categories Lo...</li>
      <li><svg class="op"><use href="#open"/></svg><svg class="ti"><use href="#t-table"/></svg>Product Lookup</li>
      <li><svg class="op"><use href="#open"/></svg><svg class="ti m"><use href="#t-mix"/></svg>Product Metric Selecti...</li>
      <li><svg class="op"><use href="#open"/></svg><svg class="ti"><use href="#t-table"/></svg>Product Subcategorie...</li>
      <li><svg class="op"><use href="#open"/></svg><svg class="ti"><use href="#t-table"/></svg>Returns Data</li>
      <li><svg class="op"><use href="#open"/></svg><svg class="ti"><use href="#t-table"/></svg>Sales Data</li>
      <li><svg class="op"><use href="#open"/></svg><svg class="ti"><use href="#t-table"/></svg>Territory Lookup</li>
    </ul>
  </aside>

  <aside class="switch">
    <div class="on"><svg viewBox="0 0 24 24"><g class="k"><path d="M3.500 5v14q0 4 8.500 4t8.500-4V5" fill="#fff"/><ellipse cx="12" cy="5" rx="8.500" ry="3.500" fill="#fff"/></g></svg></div>
    <div class="on"><svg viewBox="0 0 24 24"><g class="p"><path d="M1 10h6v12H1zM7 1h7v21H7zM14 6h6v3" fill="#fff"/></g><path d="M13 12v8.500q0 2.500 5 2.500t5-2.500V12" fill="#fff" stroke="#d8690f" stroke-width="1.500"/><ellipse cx="18" cy="12" rx="5" ry="2" fill="#fff" stroke="#d8690f" stroke-width="1.500"/></svg></div>
    <div><svg viewBox="0 0 24 24"><g class="p"><path d="M1 19V10h6v8M7 10V1h7v10M14 6h5v3"/></g><path d="M23 8l1 2-9 10-3-2z" fill="#fff" stroke="#484644" stroke-width="1.300"/><path d="M12 17q-4 0-4 3t-4 3q8 3 12-3z" fill="#6fb4ea" stroke="#0f6cbd" stroke-width="1.300"/></svg></div>
    <div><svg viewBox="0 0 24 24"><path class="p" d="M5 1h14v22l-7-6-7 6z"/></svg></div>
    <div><svg viewBox="0 0 24 24"><path d="M8 1h15v12H8z" fill="#f8cf87" stroke="#d8851f" stroke-width="1.500"/><path class="p" d="M1 11h12v12H1z" fill="#fff"/><path d="M13 8l9 9-4 1 3 5-2 1-3-5-3 3z" fill="#fff" stroke="#333" stroke-width="1.300"/></svg></div>
    <div><svg viewBox="0 0 24 24"><path d="M12 1v22M1 12h22" stroke="#111" stroke-width="1.700"/></svg></div>
    <div class="gear"><svg viewBox="0 0 24 24"><g fill="none" stroke="#323130" stroke-width="1.700"><path d="M9.500 1.500h5l.8 3.200 2 1.200 3.200-1 2.500 4.300L20.500 12l2.500 2.800-2.500 4.300-3.200-1-2 1.200-.8 3.200h-5l-.8-3.200-2-1.200-3.200 1L1 14.800 3.500 12 1 9.200l2.500-4.300 3.200 1 2-1.200z"/><circle cx="12" cy="12" r="3.800"/></g></svg></div>
  </aside>
</main>

<footer class="status"><span>Page 4 of 5</span>
  <svg viewBox="1650 990 160 28"><g stroke="#484644"><path d="M1657 1006.500h4M1799 1006.500h9M1803.500 1002v9" stroke-width="1.800"/><path d="M1667 1006.500h126" stroke-width="1"/><path d="M1717 1000v12" stroke-width="5"/><path d="M1730 1002.500v8" stroke-width="1"/></g></svg>
  <span class="pct">82%</span>
  <svg class="fit" viewBox="0 0 20 16"><path d="M.7.7h18.600v14.600H.7zM4 6V4h3M13 4h3v2M16 10v2h-3M7 12H4v-2" fill="none" stroke="#484644" stroke-width="1.300"/></svg>
</footer>
</body>
</html>
```
FILE: styles.css
```css
* { box-sizing: border-box; }
body { margin: 0; width: 1919px; height: 1018px; overflow: hidden; display: flex; flex-direction: column; background: #f3f2f1; color: #252423; font-family: "Open Sans", "Noto Sans", sans-serif; font-size: 14.2px; letter-spacing: -0.013em; }
svg { display: block; flex: none; overflow: visible; }
.defs { position: absolute; }
h2, h3, p, ul { margin: 0; padding: 0; }

/* icon strokes and fills */
.a { fill: none; stroke: #484644; stroke-width: 1.6; }
.w { fill: #fff; stroke: #484644; stroke-width: 1.4; }
.b { fill: #83beec; stroke: #1068b5; stroke-width: 1.4; }
.g { fill: #c8c6c4; stroke: #797775; stroke-width: 1.3; }
.gw { fill: #fff; stroke: #797775; stroke-width: 1.3; }
.bl { fill: none; stroke: #1a7fd0; stroke-width: 1.4; }
.gl { fill: none; stroke: #979593; stroke-width: 1.2; }
.o { fill: #fbd38b; stroke: #d67f1e; stroke-width: 1.2; }
.k { fill: none; stroke: #3b3a39; stroke-width: 1.6; }
.p { fill: none; stroke: #605e5c; stroke-width: 1.7; }
.t { fill: none; stroke: #323130; stroke-width: 1.3; }
.tf { fill: #323130; }
.n123 { font-size: 10px; fill: #1a7fd0; letter-spacing: 0; }
.lang { font-size: 19px; font-weight: 700; fill: #2488cf; letter-spacing: -0.5px; }
.bigA { font-size: 24px; fill: #2a86c7; text-anchor: middle; }
.fx { font: italic 24px "Liberation Serif", serif; fill: #aaa; }
.vt { font-size: 8.5px; font-weight: 600; fill: #797775; letter-spacing: 0; }
.dots { stroke: #3b3a39; stroke-width: 4; stroke-dasharray: 4 2; fill: none; }

.titlebar { height: 43px; flex: none; background: #3b3a37; color: #fff; display: flex; align-items: center; }
.tb-icons { width: 120px; height: 43px; }
.file { margin-left: 6px; width: 323px; padding-top: 5px; font-size: 14.7px; white-space: nowrap; }
.caret { width: 11px; height: 5px; margin-top: 3px; }
.user { margin-left: auto; margin-right: 11px; font-size: 14.6px; white-space: nowrap; }
.wins { width: 209px; height: 43px; }

.menu { height: 45px; flex: none; background: #fafafa; padding: 0 6px 0 28px; display: grid; grid-template-columns: 73px 87px 83px 113px 76px 110px 60px 1fr; font-size: 16.7px; line-height: 40px; }
.menu > span { position: relative; }
.menu .on { font-weight: 600; letter-spacing: -0.01em; }
.menu .on::after { content: ""; position: absolute; left: 0; top: 35px; width: 48px; height: 3px; background: #117865; }
.share { justify-self: end; margin-top: 5px; width: 105px; height: 30px; border: 0; border-radius: 4px; background: #117865; color: #fff; font: inherit; font-size: 14.5px; line-height: 20px; display: flex; align-items: center; padding: 0 10px 0 9px; gap: 10px; }
.share svg { width: 19px; height: 18px; }
.share .sc { width: 13px; height: 8px; margin-left: -5px; }

.ribbon { height: 112px; flex: none; background: #fafafa; display: flex; position: relative; z-index: 2; box-shadow: 0 1px 4px rgba(0,0,0,.2); }
.grp { height: 110px; border-right: 1px solid #d2d0ce; display: flex; flex-direction: column; align-items: center; }
.btns { height: 93px; flex: none; width: 100%; display: grid; justify-content: start; }
.gl-label { flex: none; font-size: 12px; line-height: 20px; }
.rb { padding-top: 3px; line-height: 20px; white-space: nowrap; display: flex; flex-direction: column; align-items: center; }
.rb > svg { width: 40px; height: 44px; margin-bottom: 2px; }
.rb span { display: flex; align-items: center; gap: 2px; height: 20px; }
.cv { width: 10px; height: 8px; margin-top: 3px; }
.off, .stack { color: #c8c6c4; }
.stack { margin-top: -1px; }
.stack div { height: 30px; display: flex; align-items: center; gap: 4px; }
.stack svg { width: 20px; height: 20px; }
.g-clip { width: 201px; } .g-clip .btns { grid-template-columns: 60px 130px; padding-left: 5px; }
.g-data { width: 449px; } .g-data .btns { grid-template-columns: 60px 62px 76px 44px 54px 66px 74px; padding-left: 4px; }
.g-query { width: 145px; } .g-query .btns { grid-template-columns: 78px 48px; padding-left: 5px; }
.g-ins { width: 510px; } .g-ins .btns { grid-template-columns: 56px 321px 56px 56px; padding-left: 7px; }
.g-calc { width: 233px; } .g-calc .btns { grid-template-columns: 90px 62px 58px; padding-left: 11px; }
.g-sens { width: 92px; } .g-sens .btns, .g-share .btns { justify-content: center; }
.g-share { width: 74px; }
.g-cop { width: 164px; } .g-cop .btns { grid-template-columns: 90px 54px; padding-left: 10px; }
.gallery { margin: 8px 2px 0; width: 317px; height: 77px; border: 1px solid #8a8886; background: #fff; display: flex; }
.gal-grid { width: 295px; display: grid; grid-template-columns: repeat(9, 32.5px); grid-template-rows: 37px 37px; align-items: center; justify-items: center; padding-left: 1px; }
.gal-grid svg { width: 20px; height: 20px; }
.gal-more { flex: 1; border-left: 1px solid #8a8886; display: flex; align-items: center; justify-content: center; }
.collapse { width: 12px; height: 8px; margin: 98px 0 0 35px; }

.main { height: 790px; flex: none; display: flex; }
.views { width: 51px; border-right: 1px solid #e1dfdd; flex: none; }
.views div { height: 50px; display: flex; align-items: center; padding-left: 13px; border-left: 0 solid #117865; }
.views .on { border-left-width: 3px; padding-left: 10px; }
.views svg { width: 24px; height: 24px; }
.center { width: 1376px; flex: none; }
.work { height: 746px; display: flex; background: #fff; }
.area { width: 1336px; border-right: 1px solid #a19f9d; padding-left: 11px; }
.page { width: 1313px; height: 738px; border: 2px dotted #605e5c; border-top: 0; display: flex; }
.pnav { width: 47px; background: #323232; border-right: 1px solid #8a8886; flex: none; }
.pnav svg { width: 47px; height: 736px; }
.kpis { width: 319px; flex: none; padding: 80px 0 0 23px; }
.kpi { width: 229px; height: 102px; border-radius: 15px; background: #323232; color: #fff; display: flex; flex-direction: column; align-items: center; }
.kpi b { font-size: 52px; line-height: 80px; color: #21e4da; letter-spacing: 0; white-space: nowrap; }
.kpi span { font-size: 12.2px; line-height: 16px; margin-top: -8px; letter-spacing: -0.03em; }
.kpi.two { margin: 38px 0 0 1px; }
.kpi.two b { line-height: 88px; margin-left: -9px; word-spacing: 3px; }
.kpi.two span { margin: -11px 4px 0 0; }
.donuts { width: 260px; height: 396px; margin: 18px 0 0 -4px; }
.dt { font-size: 13.3px; fill: #252423; }
.dl { font-size: 10.8px; fill: #605e5c; }
.ld { fill: none; stroke: #a19f9d; stroke-width: 1; }

.content { width: 943px; }
.trend { height: 330px; position: relative; }
.trend > svg { width: 943px; height: 330px; }
.grid path { fill: none; stroke: #c0c0c0; stroke-width: 1; stroke-dasharray: 1 4; }
.ax { font-size: 10.5px; fill: #605e5c; }
.pick { position: absolute; left: 43px; top: 87px; display: flex; gap: 1px; font-size: 13.2px; color: #605e5c; background: #fff; }
.pick span { width: 164px; height: 42px; line-height: 43px; text-align: center; border: 1px solid #979593; white-space: nowrap; }
.pick .on { background: #323232; color: #fff; }

.lower { height: 406px; display: flex; }
.tbl { width: 427px; padding-left: 11px; font-size: 12.7px; }
h3 { font-weight: 400; font-size: 18.1px; line-height: 45px; height: 40px; text-align: center; width: 403px; padding-left: 20px; }
.r { display: grid; width: 403px; grid-template-columns: 96px 180px 48.5px 78.5px; grid-template-rows: 100%; height: 19.43px; line-height: 19px; white-space: nowrap; }
.r span { padding-right: 5px; }
.r span:nth-child(1), .r span:nth-child(3), .r span:nth-child(4) { text-align: right; }
.r span:nth-child(2) { padding-left: 5px; }
.r span:nth-child(3) { padding-right: 4px; }
.head { height: 27px; border-bottom: 1px solid #c8c6c4; font-weight: 700; color: #605e5c; letter-spacing: 0.008em; }
.head span:nth-child(4) { text-align: left; padding-left: 5px; position: relative; }
.head span:nth-child(4)::after { content: ""; position: absolute; left: 6px; top: 19px; border: 4.5px solid transparent; border-top: 4px solid #605e5c; border-bottom: 0; }
.rows { width: 403px; height: 306px; overflow: hidden; border-bottom: 1px solid #c8c6c4; }
.rows .r span { border-bottom: 1px solid #f0efee; }
.rows .r span:nth-child(2) { letter-spacing: 0.023em; }
.rows .r span:nth-child(3) { border-left: 1px dashed #333; background: linear-gradient(#ccc, #ccc) no-repeat 0 0 / 10px 100%; }
.rows .r .o7:nth-child(3) { background-size: 11.5px 100%; }
.rows .r .o4:nth-child(3) { background-size: 6.5px 100%; }
.rows .r span:nth-child(4) { border-bottom-color: #a5f3ee; }
.total { font-weight: 700; letter-spacing: 0.01em; }
.thumb { width: 8px; height: 28px; margin-top: 40px; border-radius: 4px; background: #b3b0ad; }
.detail { width: 475px; margin-left: 16px; }
.lbl { font-size: 13px; padding-left: 5px; line-height: 20px; }
.detail > .lbl { padding-top: 43px; height: 70px; font-size: 13.1px; }
.dbox { background: #323232; border: 1px solid #8a8886; border-top-color: #605e5c; color: #21e4da; font-weight: 700; font-size: 33px; display: flex; align-items: center; justify-content: center; letter-spacing: -0.005em; height: 67px; }
.dbox.name { color: #fff; height: 65px; font-size: 33.2px; letter-spacing: -0.02em; padding-bottom: 3px; }
.pair { display: grid; grid-template-columns: 224px 235px; gap: 16px; }
.pair .lbl { padding-top: 17px; height: 42px; }
.yr { font-size: 10.8px; font-weight: 600; padding-left: 14px; height: 25px; line-height: 21px; }
.yrs { display: flex; gap: 5px; padding-left: 13px; }
.yrs span { width: 76px; height: 27px; border: 1px solid #edebe9; padding-left: 7px; font-size: 12.2px; line-height: 26px; }
.ysl { width: 475px; height: 34px; margin-top: 4px; }
.info { display: flex; gap: 10px; padding: 5px 0 0 10px; align-items: center; }
.info svg { width: 50px; height: 50px; }
.info p { font-size: 13.25px; line-height: 18px; color: #605e5c; white-space: nowrap; padding-top: 2px; }

.filters { width: 40px; display: flex; flex-direction: column; align-items: center; }
.dc { width: 15px; height: 16px; }
.filters .dc { margin: 15px 0 0 0; transform: scaleX(-1); }
.fn { width: 16px; height: 16px; margin: 20px 0 0 7px; }
.filters span { writing-mode: vertical-rl; font-weight: 600; font-size: 18px; margin-top: 9px; line-height: 20px; letter-spacing: 0; }

.tabs { height: 44px; display: flex; background: #f3f2f1; font-size: 14.3px; }
.tabicons { width: 159px; height: 44px; }
.tab { background: #fff; border-left: 1px solid #c8c6c4; text-align: center; line-height: 45px; white-space: nowrap; position: relative; padding-right: 2px; }
.t1 { width: 157px; border-color: #979593; } .t2 { width: 81px; } .t3 { width: 146px; }
.t4 { width: 160px; font-weight: 600; letter-spacing: 0; border-bottom: 5px solid #117865; }
.t4 i { position: absolute; right: 7px; top: 1px; font-style: normal; font-size: 12px; line-height: 22px; }
.t5 { width: 161px; display: flex; align-items: center; gap: 4px; padding-left: 14px; }
.t5 svg { width: 16px; height: 14px; margin-top: 4px; }
.add { width: 48px; background: #117865; display: flex; align-items: center; justify-content: center; padding-bottom: 3px; }
.add svg { width: 14px; height: 14px; }

.pane { width: 226px; flex: none; border-left: 1px solid #e1dfdd; }
.ph { height: 44px; display: flex; align-items: center; padding: 5px 10px 0 10px; }
.ph h2 { font-size: 18px; font-weight: 700; letter-spacing: -0.02em; flex: 1; }
.dots3 { width: 20px; height: 2px; background: radial-gradient(circle at 1px 1px, #323130 1.2px, transparent 1.3px) 0 0 / 8.5px 2px repeat-x; }
.ph .dots3 { margin-right: 9px; }
.sub { font-size: 14.2px; line-height: 20px; padding-left: 10px; margin-top: 4px; }
.vis { margin: 4px 0 0 10px; width: 205px; height: 235px; border: 1px solid #8a8886; border-radius: 2px; background: #fff; display: grid; grid-template-columns: repeat(6, 32.5px); grid-template-rows: repeat(7, 32.5px); align-items: center; justify-items: center; padding: 2px 0 0 4px; }
.vis svg { width: 23px; height: 23px; }
.sub.d { margin-top: 11px; }
.drop { margin: 4px 0 0 10px; width: 205px; height: 49px; border: 1px dashed #605e5c; background: #fff; padding: 5px; border-radius: 2px; }
.drop div { height: 37px; border: 1px solid #605e5c; border-radius: 2px; text-align: center; line-height: 36px; font-weight: 600; font-size: 14px; }

.search { margin: 13px 0 0 5px; width: 215px; height: 30px; border: 1px solid #d2d0ce; border-bottom: 1px solid #605e5c; border-radius: 4px; background: #fff; display: flex; align-items: center; padding-left: 14px; gap: 9px; font-size: 16px; color: #706e6c; }
.search svg { width: 18px; height: 18px; }
.search span { padding-top: 3px; }
ul { list-style: none; padding-top: 11px; }
li { height: 30px; display: flex; align-items: center; padding-left: 19px; font-size: 14.45px; color: #323130; white-space: nowrap; }
.op { width: 9px; height: 15px; margin-right: 8px; }
.ti { width: 16px; height: 16px; margin-right: 7px; }
.ti.m { width: 18px; height: 18px; margin-right: 5px; }

.switch { width: 40px; border-left: 1px solid #e1dfdd; background: #faf9f8; display: flex; flex-direction: column; }
.switch div { height: 40px; display: flex; align-items: center; justify-content: center; }
.switch .on { background: #e1dfdd; border: 1px solid #605e5c; border-right: 0; }
.switch svg { width: 23px; height: 23px; }
.switch .gear { margin-top: auto; border-top: 1px solid #d2d0ce; }

.status { height: 28px; border-top: 1px solid #e1dfdd; display: flex; align-items: center; padding: 4px 21px 0 5px; font-size: 14px; color: #484644; }
.status span:first-child { flex: 1; }
.status span { margin-top: -1px; }
.status svg { width: 160px; height: 28px; margin-top: -5px; }
.status .pct { width: 68px; padding-left: 15px; color: #605e5c; margin-top: -4px; }
.status .fit { width: 20px; height: 16px; margin-top: 1px; }
```
